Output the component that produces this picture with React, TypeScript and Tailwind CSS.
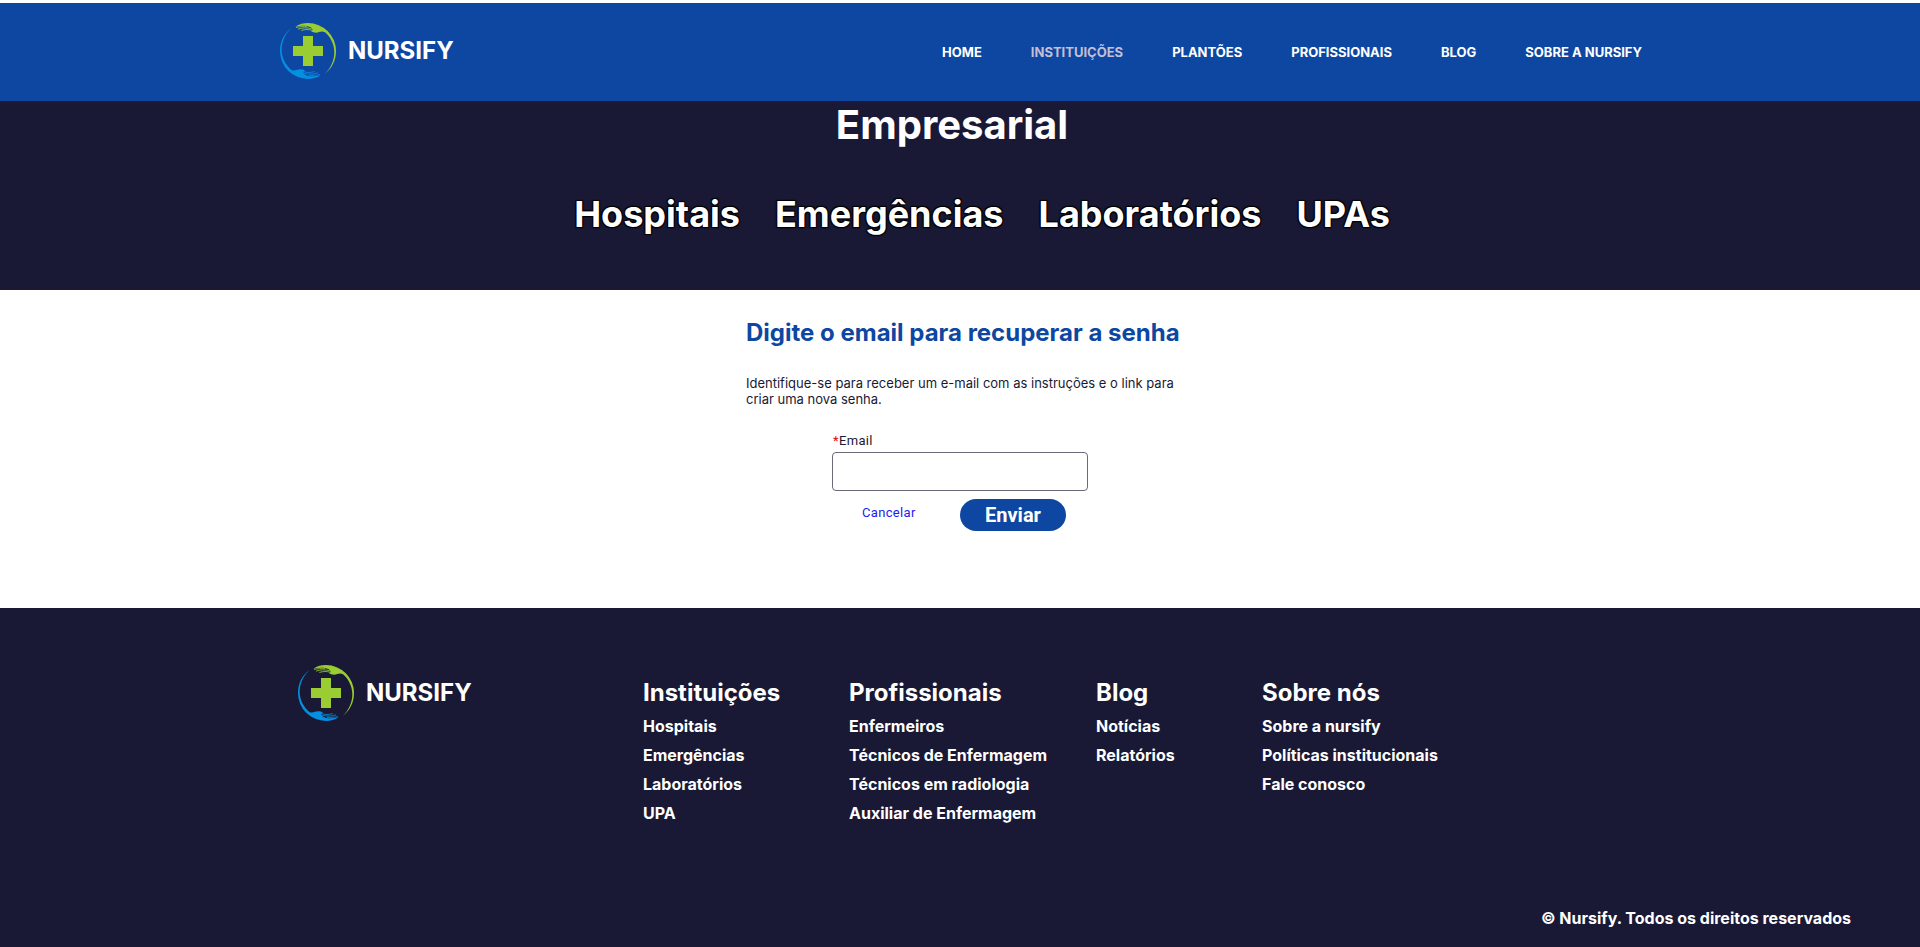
type LinkColumn = { title: string; links: string[] };

const navItems = ["HOME", "INSTITUIÇÕES", "PLANTÕES", "PROFISSIONAIS", "BLOG", "SOBRE A NURSIFY"];
const activeItem = "INSTITUIÇÕES";

const categories = ["Hospitais", "Emergências", "Laboratórios", "UPAs"];

const columns: LinkColumn[] = [
  { title: "Instituições", links: ["Hospitais", "Emergências", "Laboratórios", "UPA"] },
  {
    title: "Profissionais",
    links: ["Enfermeiros", "Técnicos de Enfermagem", "Técnicos em radiologia", "Auxiliar de Enfermagem"],
  },
  { title: "Blog", links: ["Notícias", "Relatórios"] },
  { title: "Sobre nós", links: ["Sobre a nursify", "Políticas institucionais", "Fale conosco"] },
];

function Hand() {
  return (
    <>
      <path
        fill="currentColor"
        d="M46 11C58 3 70 0 84 0A84 84 0 0 1 168 84C168 112 156 136 134 153C153 134 163 112 163 86C162 62 151 42 135 28C124 22 118 29 108 29C102 29 97 28 93 24L99 22C96 20 97 16 92 13C84 7 62 7 46 11Z"
      />
      <g fill="none" stroke="currentColor" strokeWidth="2.5" strokeLinecap="round">
        <path d="M80 11C70 10 58 11 49 13" />
        <path d="M94 17C82 13 66 14 55 18" />
        <path d="M97 22C86 18 76 19 65 22" />
      </g>
    </>
  );
}

function Logo() {
  return (
    <a href="#inicio" className="flex items-center gap-3">
      <svg viewBox="0 0 168 168" className="size-14" aria-hidden="true">
        <g className="text-[#9acd32]">
          <Hand />
        </g>
        <g className="text-[#058fe0]" transform="rotate(180 84 84)">
          <Hand />
        </g>
        <path fill="#9acd32" d="M69 39H99V69H129V99H99V129H69V99H39V69H69Z" />
      </svg>
      <span className="text-2xl font-bold">NURSIFY</span>
    </a>
  );
}

export default function App() {
  return (
    <div className="flex min-h-screen flex-col bg-white pt-[3px] font-['Inter',sans-serif] text-white">
      <header className="flex h-[98px] items-center justify-between bg-[#0d47a1] pr-[278px] pb-0.5 pl-[280px]">
        <Logo />
        <nav className="flex gap-[49px] pt-1 text-[13px] font-bold">
          {navItems.map((item) => (
            <a key={item} href="#menu" className={item === activeItem ? "text-[#c4bfd4]" : "text-white"}>
              {item}
            </a>
          ))}
        </nav>
      </header>

      <section className="flex h-[189px] flex-col items-center bg-[#191935]">
        <h1 className="mr-4 text-[40px] leading-12 font-bold">Empresarial</h1>
        <nav className="mt-[41px] ml-11 flex gap-[35px] text-4xl leading-12 font-bold [text-shadow:1px_1px_1px_#000,-1px_-1px_1px_#000,1px_-1px_1px_#000,-1px_1px_1px_#000]">
          {categories.map((name) => (
            <a key={name} href="#categoria">
              {name}
            </a>
          ))}
        </nav>
      </section>

      <main className="flex h-[318px] flex-col items-center pt-[29px] text-[#191935]">
        <div className="ml-2 w-[436px]">
          <h2 className="text-2xl leading-7 font-bold whitespace-nowrap text-[#0d47a1]">
            Digite o email para recuperar a senha
          </h2>
          <p className="mt-7 text-[13px] leading-4">
            Identifique-se para receber um e-mail com as instruções e o link para criar uma nova senha.
          </p>
        </div>
        <form className="mt-6 w-64 font-['Roboto',sans-serif]" onSubmit={(event) => event.preventDefault()}>
          <label htmlFor="email" className="block pl-px text-[13px] leading-5 tracking-wide">
            <span className="text-red-600">*</span>Email
          </label>
          <input
            id="email"
            type="email"
            required
            className="mt-px h-[39px] w-full rounded border border-[#6b6878] px-3 text-sm outline-none"
          />
          <div className="mt-2 flex items-center justify-between pr-[22px] pl-[30px]">
            <a href="#cancelar" className="pb-1 text-[13px] tracking-wide text-[#1c1cf0]">
              Cancelar
            </a>
            <button type="submit" className="h-8 w-[106px] rounded-full bg-[#0d47a1] text-xl font-bold text-white">
              Enviar
            </button>
          </div>
        </form>
      </main>

      <footer className="flex flex-1 flex-col justify-between bg-[#191935] pt-[57px] pr-[69px] pb-[17px] pl-[298px] font-bold">
        <div className="flex">
          <div className="w-[345px]">
            <Logo />
          </div>
          <div className="grid grid-cols-[206px_247px_166px_auto] pt-3">
            {columns.map((column) => (
              <section key={column.title}>
                <h3 className="text-2xl leading-8">{column.title}</h3>
                <ul className="mt-[3px]">
                  {column.links.map((link) => (
                    <li key={link} className="leading-[29px]">
                      <a href="#rodape">{link}</a>
                    </li>
                  ))}
                </ul>
              </section>
            ))}
          </div>
        </div>
        <p className="text-right">© Nursify. Todos os direitos reservados</p>
      </footer>
    </div>
  );
}
